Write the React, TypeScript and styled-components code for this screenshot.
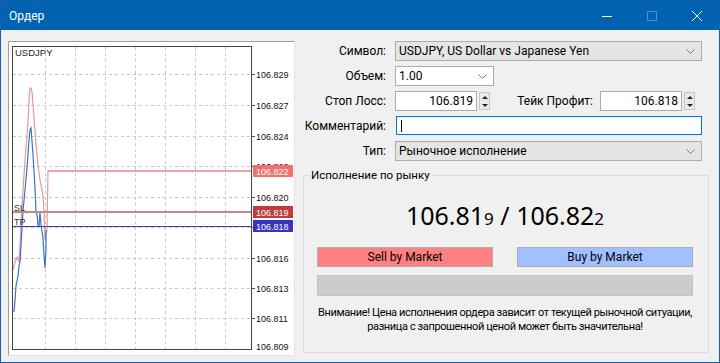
import React from 'react';
import styled, { createGlobalStyle } from 'styled-components';

const GlobalStyle = createGlobalStyle`
  html, body {
    margin: 0;
    padding: 0;
    background: #f0f0f0;
  }
  body {
    font-family: Roboto, "Noto Sans", sans-serif;
    font-size: 12px;
    color: #000;
  }
`;

const Window = styled.div`
  width: 720px;
  height: 363px;
  box-sizing: border-box;
  border: 1px solid #1a5fa8;
  display: flex;
  flex-direction: column;
  background: #f0f0f0;
  overflow: hidden;
`;

const TitleBar = styled.div`
  height: 29px;
  flex: none;
  background: #0063b1;
  display: flex;
  align-items: center;
  color: #fff;
  padding-left: 8px;
`;

const TitleText = styled.span`
  flex: 1;
  font-size: 12px;
`;

const WinButton = styled.div<{ dim?: boolean }>`
  width: 45px;
  height: 29px;
  display: flex;
  align-items: center;
  justify-content: center;
  opacity: ${p => (p.dim ? 0.3 : 1)};
`;

const Body = styled.div`
  flex: 1;
  display: flex;
  padding: 11px 7px 6px 7px;
`;

const ChartPanel = styled.div`
  width: 287px;
  height: 315px;
  box-sizing: border-box;
  border: 1px solid #a0a0a0;
  border-right-color: #e3e3e3;
  border-bottom-color: #e3e3e3;
  background: #fff;
  flex: none;
  svg {
    display: block;
  }
`;

const FormColumn = styled.div`
  margin-left: 8px;
  width: 406px;
  display: flex;
  flex-direction: column;
`;

const Fields = styled.div`
  display: grid;
  grid-template-columns: 83px 307px;
  grid-auto-rows: 20px;
  column-gap: 9px;
  row-gap: 5px;
`;

const Label = styled.div`
  display: flex;
  align-items: center;
  justify-content: flex-end;
  white-space: nowrap;
`;

const Select = styled.div<{ grey?: boolean; width?: number }>`
  box-sizing: border-box;
  height: 20px;
  width: ${p => (p.width ? `${p.width}px` : '100%')};
  border: 1px solid #acacac;
  background: ${p => (p.grey ? '#e5e5e5' : '#fff')};
  display: flex;
  align-items: center;
  padding: 0 6px 0 3px;
  span {
    flex: 1;
    white-space: nowrap;
  }
`;

const Row = styled.div`
  display: flex;
  align-items: center;
`;

const RowLabel = styled.div`
  flex: 1;
  text-align: right;
  padding-right: 7px;
  white-space: nowrap;
`;

const SpinWrap = styled.div`
  display: flex;
  align-items: center;
  gap: 2px;
  height: 20px;
`;

const NumberBox = styled.div`
  box-sizing: border-box;
  width: 82px;
  height: 20px;
  border: 1px solid #acacac;
  background: #fff;
  display: flex;
  align-items: center;
  justify-content: flex-end;
  padding-right: 3px;
`;

const Spinner = styled.div`
  box-sizing: border-box;
  width: 11px;
  height: 18px;
  border: 1px solid #c6c6c6;
  background: #e9e9e9;
  display: flex;
  flex-direction: column;
  align-items: center;
  justify-content: space-around;
`;

const Arrow = styled.div<{ up?: boolean }>`
  width: 0;
  height: 0;
  border-left: 3px solid transparent;
  border-right: 3px solid transparent;
  ${p => (p.up ? 'border-bottom: 3px solid #222;' : 'border-top: 3px solid #222;')}
`;

const TextInput = styled.div`
  box-sizing: border-box;
  height: 19px;
  margin-left: 1px;
  border: 1px solid #0078d7;
  background: #fff;
  display: flex;
  align-items: center;
  padding-left: 4px;
`;

const Caret = styled.div`
  width: 1px;
  height: 12px;
  background: #000;
`;

const Group = styled.fieldset`
  margin: 6px 0 0 0;
  padding: 0 15px 0 13px;
  height: 186px;
  box-sizing: border-box;
  border: 1px solid #dcdcdc;
  min-width: 0;
  legend {
    padding: 0 2px;
    margin-left: -8px;
    line-height: 16px;
    font-size: 11.5px;
  }
`;

const Quote = styled.div`
  text-align: center;
  margin-top: 17px;
  font-size: 25px;
  line-height: 30px;
  font-family: "Noto Sans", sans-serif;
  small {
    font-size: 17px;
  }
`;

const ButtonRow = styled.div`
  display: grid;
  grid-template-columns: 176px 176px;
  justify-content: space-between;
  margin-top: 13px;
`;

const TradeButton = styled.div<{ color: string }>`
  box-sizing: border-box;
  height: 20px;
  border: 1px solid #adadad;
  background: ${p => p.color};
  display: flex;
  align-items: center;
  justify-content: center;
`;

const Progress = styled.div`
  margin-top: 8px;
  height: 21px;
  box-sizing: border-box;
  background: #cccccc;
  border: 1px solid #c4c4c4;
`;

const Warning = styled.div`
  margin-top: 10px;
  text-align: center;
  font-size: 11px;
  letter-spacing: -0.38px;
  line-height: 14px;
  white-space: nowrap;
`;

function Chevron() {
  return (
    <svg width="9" height="5" viewBox="0 0 9 5">
      <polyline points="0.5,0.5 4.5,4.5 8.5,0.5" fill="none" stroke="#7a7a7a" strokeWidth="1" />
    </svg>
  );
}

function SpinBox({ value }: { value: string }) {
  return (
    <SpinWrap>
      <NumberBox>{value}</NumberBox>
      <Spinner>
        <Arrow up />
        <Arrow />
      </Spinner>
    </SpinWrap>
  );
}

const gridX = [45, 75, 105, 135, 165, 195, 225];
const levels: [number, string][] = [
  [74, '106.829'],
  [105, '106.827'],
  [136, '106.824'],
  [166, '106.822'],
  [197, '106.820'],
  [227, '106.818'],
  [258, '106.816'],
  [288, '106.813'],
  [318, '106.811'],
];

const askPath =
  'M13,270 L15,262 L17,257 L19,262 L20,245 L21,225 L23,190 L25,160 L27,135 L28,121 L29,100 L30,88 L31,88 L32,92 L34,118 L36,145 L38,165 L40,180 L42,190 L43,196 L44,213 L45,240 L47,230 L48,171 L251,171';
const bidPath =
  'M14,312 L15,300 L16,286 L18,276 L19,266 L20,262 L21,245 L23,211 L25,190 L27,168 L29,140 L30,130 L31,128 L33,155 L35,188 L36,212 L37,215 L38,225 L39,226 L40,212 L41,225 L43,238 L44,255 L45,268 L46,250 L46,230';

function PriceChart() {
  return (
    <svg width="285" height="313" viewBox="9 42 285 313" fontFamily="'Liberation Sans', Arial, sans-serif">
      {gridX.map(x => (
        <line key={x} x1={x + 0.5} y1={47} x2={x + 0.5} y2={349} stroke="#c8c8c8" strokeDasharray="3 3" />
      ))}
      {levels.map(([y]) => (
        <line key={y} x1={13} y1={y + 0.5} x2={251} y2={y + 0.5} stroke="#c8c8c8" strokeDasharray="3 3" />
      ))}
      {levels.map(([y, t]) => (
        <g key={t}>
          <line x1={251} y1={y + 0.5} x2={255} y2={y + 0.5} stroke="#555" />
          <text x={256} y={y + 3.5} fontSize="9" fill="#111">{t}</text>
        </g>
      ))}
      <text x={256} y={350} fontSize="9" fill="#111">106.809</text>
      <path d={askPath} fill="none" stroke="#e49a9a" strokeWidth="1.2" />
      <path d={bidPath} fill="none" stroke="#3b74c4" strokeWidth="1.2" />
      <line x1={48} y1={171} x2={251} y2={171} stroke="#e8a6a6" strokeWidth="2" />
      <line x1={13} y1={212} x2={251} y2={212} stroke="#cc8585" strokeWidth="2" />
      <line x1={13} y1={226.5} x2={251} y2={226.5} stroke="#4040b4" />
      <text x={14} y={211} fontSize="9" fill="#333">SL</text>
      <text x={14} y={225} fontSize="9" fill="#333">TP</text>
      <rect x={12.5} y={46.5} width={239} height={303} fill="none" stroke="#444" />
      <text x={15} y={56} fontSize="9.5" fill="#222">USDJPY</text>
      <rect x={253} y={165} width={40} height={12} fill="#f07070" />
      <text x={256} y={174.5} fontSize="9" fill="#fff">106.822</text>
      <rect x={253} y={206} width={40} height={12} fill="#c13a3c" />
      <text x={256} y={215.5} fontSize="9" fill="#fff">106.819</text>
      <rect x={253} y={220} width={40} height={12} fill="#3434c0" />
      <text x={256} y={229.5} fontSize="9" fill="#fff">106.818</text>
    </svg>
  );
}

export default function App() {
  return (
    <>
      <GlobalStyle />
      <Window>
        <TitleBar>
          <TitleText>Ордер</TitleText>
          <WinButton>
            <svg width="10" height="10" viewBox="0 0 10 10">
              <line x1="0" y1="5.5" x2="10" y2="5.5" stroke="#fff" />
            </svg>
          </WinButton>
          <WinButton dim>
            <svg width="10" height="10" viewBox="0 0 10 10">
              <rect x="0.5" y="0.5" width="9" height="9" fill="none" stroke="#fff" />
            </svg>
          </WinButton>
          <WinButton>
            <svg width="10" height="10" viewBox="0 0 10 10">
              <path d="M0,0 L10,10 M10,0 L0,10" stroke="#fff" />
            </svg>
          </WinButton>
        </TitleBar>
        <Body>
          <ChartPanel>
            <PriceChart />
          </ChartPanel>
          <FormColumn>
            <Fields>
              <Label>Символ:</Label>
              <Select grey>
                <span>USDJPY, US Dollar vs Japanese Yen</span>
                <Chevron />
              </Select>
              <Label>Объем:</Label>
              <Select width={99}>
                <span>1.00</span>
                <Chevron />
              </Select>
              <Label>Стоп Лосс:</Label>
              <Row>
                <SpinBox value="106.819" />
                <RowLabel>Тейк Профит:</RowLabel>
                <SpinBox value="106.818" />
                <div style={{ width: 7 }} />
              </Row>
              <Label>Комментарий:</Label>
              <TextInput>
                <Caret />
              </TextInput>
              <Label>Тип:</Label>
              <Select grey>
                <span>Рыночное исполнение</span>
                <Chevron />
              </Select>
            </Fields>
            <Group>
              <legend>Исполнение по рынку</legend>
              <Quote>
                106.81<small>9</small> / 106.82<small>2</small>
              </Quote>
              <ButtonRow>
                <TradeButton color="#ff8080">Sell by Market</TradeButton>
                <TradeButton color="#a0c0ff">Buy by Market</TradeButton>
              </ButtonRow>
              <Progress />
              <Warning>
                Внимание! Цена исполнения ордера зависит от текущей рыночной ситуации,
                <br />
                разница с запрошенной ценой может быть значительна!
              </Warning>
            </Group>
          </FormColumn>
        </Body>
      </Window>
    </>
  );
}
